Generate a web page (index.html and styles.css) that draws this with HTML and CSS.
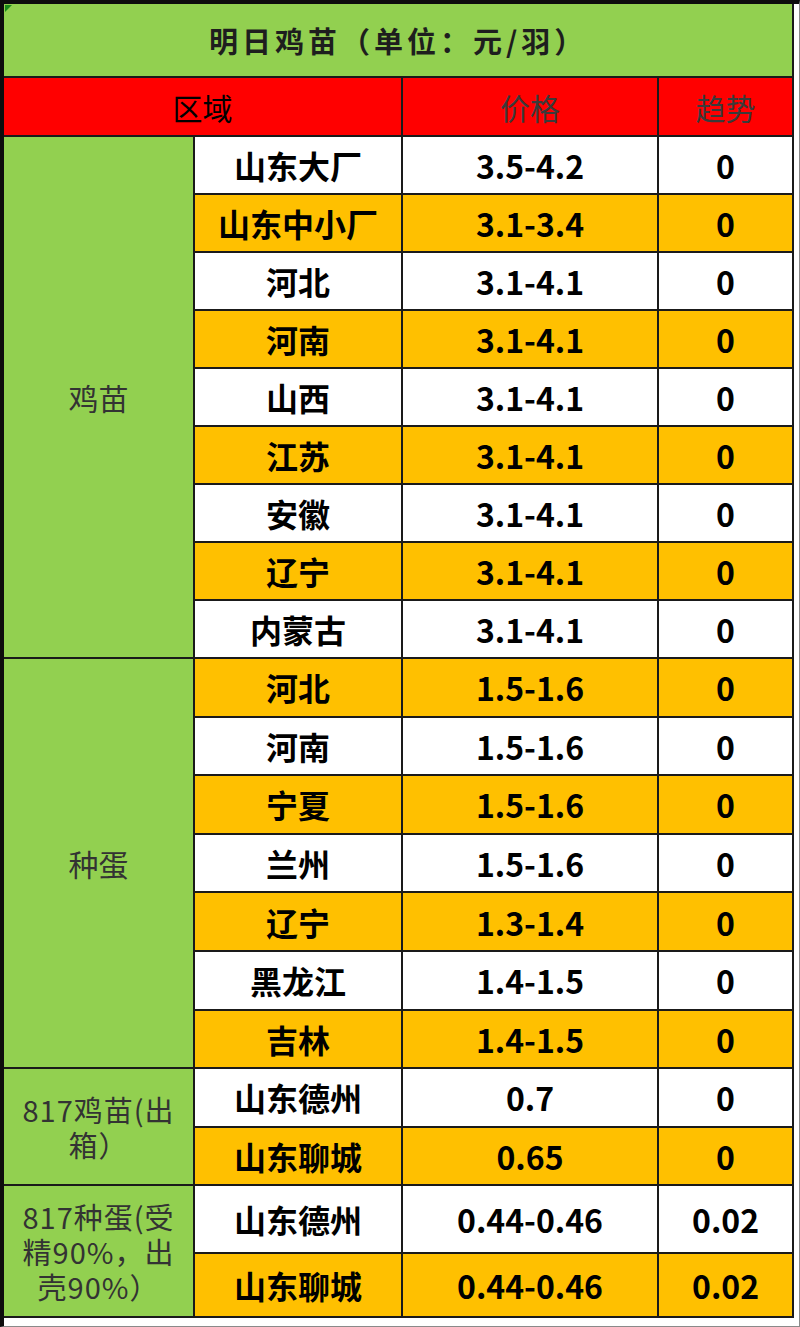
FILE: index.html
```html
<!DOCTYPE html>
<html lang="zh">
<head>
<meta charset="utf-8">
<link rel="stylesheet" href="styles.css">
</head>
<body>
<div class="frame">
<table class="sheet">
<colgroup><col class="c1"><col class="c2"><col class="c3"><col class="c4"></colgroup>
<tr class="title-row"><td colspan="4" class="title">明日鸡苗（单位：元/羽）</td></tr>
<tr class="head-row"><th colspan="2" class="h-area">区域</th><th class="h-gray">价格</th><th class="h-gray">趋势</th></tr>

<tr class="r"><td rowspan="9" class="grp">鸡苗</td><td class="w">山东大厂</td><td class="w">3.5-4.2</td><td class="w">0</td></tr>
<tr class="r"><td class="o">山东中小厂</td><td class="o">3.1-3.4</td><td class="o">0</td></tr>
<tr class="r"><td class="w">河北</td><td class="w">3.1-4.1</td><td class="w">0</td></tr>
<tr class="r"><td class="o">河南</td><td class="o">3.1-4.1</td><td class="o">0</td></tr>
<tr class="r"><td class="w">山西</td><td class="w">3.1-4.1</td><td class="w">0</td></tr>
<tr class="r"><td class="o">江苏</td><td class="o">3.1-4.1</td><td class="o">0</td></tr>
<tr class="r"><td class="w">安徽</td><td class="w">3.1-4.1</td><td class="w">0</td></tr>
<tr class="r"><td class="o">辽宁</td><td class="o">3.1-4.1</td><td class="o">0</td></tr>
<tr class="r"><td class="w">内蒙古</td><td class="w">3.1-4.1</td><td class="w">0</td></tr>

<tr class="r2"><td rowspan="7" class="grp">种蛋</td><td class="o">河北</td><td class="o">1.5-1.6</td><td class="o">0</td></tr>
<tr class="r2"><td class="w">河南</td><td class="w">1.5-1.6</td><td class="w">0</td></tr>
<tr class="r2"><td class="o">宁夏</td><td class="o">1.5-1.6</td><td class="o">0</td></tr>
<tr class="r2"><td class="w">兰州</td><td class="w">1.5-1.6</td><td class="w">0</td></tr>
<tr class="r2"><td class="o">辽宁</td><td class="o">1.3-1.4</td><td class="o">0</td></tr>
<tr class="r2"><td class="w">黑龙江</td><td class="w">1.4-1.5</td><td class="w">0</td></tr>
<tr class="r2"><td class="o">吉林</td><td class="o">1.4-1.5</td><td class="o">0</td></tr>

<tr class="r2"><td rowspan="2" class="grp small">817鸡苗(出<br>箱）</td><td class="w">山东德州</td><td class="w">0.7</td><td class="w">0</td></tr>
<tr class="r2"><td class="o">山东聊城</td><td class="o">0.65</td><td class="o">0</td></tr>

<tr class="r3"><td rowspan="2" class="grp small">817种蛋(受<br>精90%，出<br>壳90%）</td><td class="w">山东德州</td><td class="w">0.44-0.46</td><td class="w">0.02</td></tr>
<tr class="r4"><td class="o">山东聊城</td><td class="o">0.44-0.46</td><td class="o">0.02</td></tr>
</table>
</div>
</body>
</html>
```

FILE: styles.css
```css
html, body {
  margin: 0;
  padding: 0;
  background: #ffffff;
}
.frame {
  box-sizing: border-box;
  width: 800px;
  height: 1327px;
  border-top: 4px solid #0d0d0d;
  border-left: 4px solid #0d0d0d;
  border-right: 1px solid #8a8a8a;
  border-bottom: 1px solid #8a8a8a;
  overflow: hidden;
}
.sheet {
  border-collapse: collapse;
  table-layout: fixed;
  width: 789px;
  font-family: "Noto Sans CJK SC", "Noto Sans", sans-serif;
}
.c1 { width: 190px; }
.c2 { width: 208px; }
.c3 { width: 256px; }
.c4 { width: 135px; }
.sheet td, .sheet th {
  padding: 0;
  text-align: center;
  vertical-align: middle;
  border: 2px solid #1a1a1a;
  line-height: 1;
}
.title-row { height: 73px; }
.title {
  position: relative;
  background: #92d050;
  color: #1e1e1e;
  font-size: 29px;
  font-weight: 700;
  letter-spacing: 4px;
  border-top: none !important;
  border-left: none !important;
}
.title::before {
  content: "";
  position: absolute;
  left: 1px;
  top: 1px;
  border-top: 7px solid #1a8a1a;
  border-right: 7px solid transparent;
}
.head-row { height: 59px; }
.head-row th {
  background: #ff0000;
  font-size: 30px;
  font-weight: 400;
}
.h-area { color: #000000; border-left: none !important; }
.h-gray { color: #3a3a3a; }
.r { height: 58px; }
.r2 { height: 58.6px; }
.r3 { height: 68px; }
.r4 { height: 64px; }
.grp {
  background: #92d050;
  color: #333333;
  font-size: 30px;
  font-weight: 400;
  border-left: none !important;
}
.grp.small {
  font-size: 29px;
  line-height: 35px;
  letter-spacing: 1px;
}
.w, .o {
  font-size: 32px;
  font-weight: 700;
  color: #000000;
}
.w { background: #ffffff; }
.o { background: #ffc000; }
```
